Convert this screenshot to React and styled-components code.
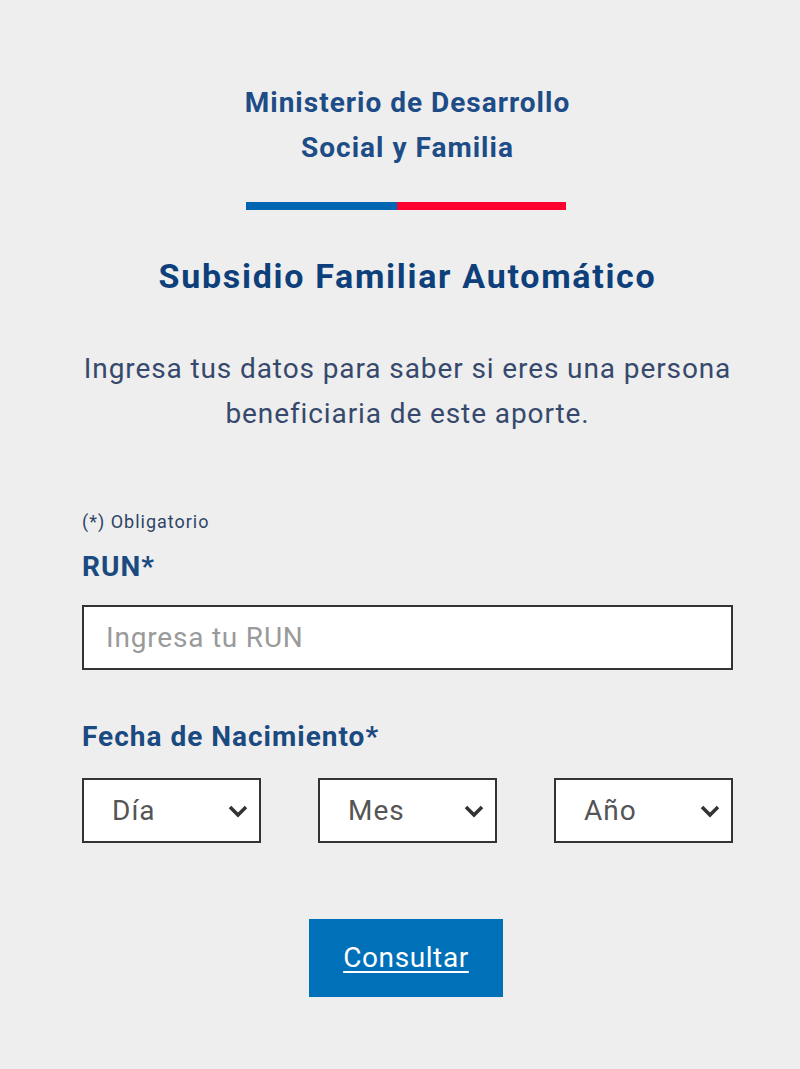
import React from "react"
import styled, { createGlobalStyle } from "styled-components"

const GlobalStyle = createGlobalStyle`
    html, body {
        margin: 0;
        padding: 0;
        background: #eeeeee;
        font-family: Roboto, "Liberation Sans", Arial, sans-serif;
    }
`

const Page = styled.div`
    width: 800px;
    min-height: 1069px;
    box-sizing: border-box;
    padding: 80px 67px 0 82px;
    display: flex;
    flex-direction: column;
    align-items: center;
`
const Ministry = styled.h2`
    margin: 0;
    font-size: 28px;
    line-height: 45px;
    letter-spacing: 1px;
    font-weight: 700;
    color: #1d4c86;
    text-align: center;
`
const FlagBar = styled.div`
    display: flex;
    height: 8px;
    margin: 32px 3px 0 0;
`
const Stripe = styled.span`
    display: block;
    height: 100%;
    width: ${p => p.$w}px;
    background: ${p => p.$color};
`
const Title = styled.h1`
    margin: 42px 0 0;
    font-size: 34px;
    line-height: 48px;
    letter-spacing: 1.7px;
    font-weight: 700;
    color: #0d3f7a;
    text-align: center;
`
const Lead = styled.p`
    margin: 46px 0 0;
    font-size: 28px;
    line-height: 45px;
    letter-spacing: 0.9px;
    font-weight: 400;
    color: #36496c;
    text-align: center;
`
const Form = styled.form`
    align-self: stretch;
    margin-top: 75px;
    display: flex;
    flex-direction: column;
`
const Required = styled.div`
    font-size: 18px;
    line-height: 22px;
    letter-spacing: 1px;
    color: #2d4466;
`
const Label = styled.label`
    display: block;
    margin-top: ${p => p.$top}px;
    font-size: 28px;
    line-height: 34px;
    letter-spacing: 1px;
    font-weight: 700;
    color: #1a4a80;
`
const TextInput = styled.input`
    box-sizing: border-box;
    margin-top: 21px;
    width: 100%;
    height: 65px;
    border: 2px solid #333;
    background: #fff;
    padding: 0 22px;
    font-family: inherit;
    font-size: 28px;
    letter-spacing: 0.8px;
    color: #333;
    outline: none;
    &::placeholder {
        color: #9a9a9a;
    }
`
const DateRow = styled.div`
    margin-top: 24px;
    display: grid;
    grid-template-columns: repeat(3, 179px);
    justify-content: space-between;
`
const SelectBox = styled.div`
    box-sizing: border-box;
    height: 65px;
    border: 2px solid #333;
    background: #fff;
    display: flex;
    align-items: center;
    justify-content: space-between;
    padding: 0 10px 0 28px;
    font-size: 28px;
    letter-spacing: 1px;
    color: #555;
`
const ButtonRow = styled.div`
    display: flex;
    justify-content: center;
    margin-top: 76px;
    padding-right: 3px;
`
const Submit = styled.button`
    width: 194px;
    height: 78px;
    border: none;
    background: #0070b8;
    color: #fff;
    font-family: inherit;
    font-size: 28px;
    line-height: 1;
    letter-spacing: 0.6px;
    text-decoration: underline;
    text-decoration-thickness: 2px;
    text-underline-offset: 4px;
    cursor: pointer;
`

const Chevron = () => (
    <svg width="22" height="14" viewBox="0 0 22 14">
        <path d="M3 3 L11 11 L19 3" fill="none" stroke="#333" strokeWidth="3.5" />
    </svg>
)

const Select = ({ label }) => (
    <SelectBox>
        <span>{label}</span>
        <Chevron />
    </SelectBox>
)

const App = () => {
    return (
        <>
            <GlobalStyle />
            <Page>
                <Ministry>
                    Ministerio de Desarrollo
                    <br />
                    Social y Familia
                </Ministry>
                <FlagBar>
                    <Stripe $w={151} $color="#0066b2" />
                    <Stripe $w={169} $color="#ff0033" />
                </FlagBar>
                <Title>Subsidio Familiar Automático</Title>
                <Lead>
                    Ingresa tus datos para saber si eres una persona
                    <br />
                    beneficiaria de este aporte.
                </Lead>
                <Form onSubmit={e => e.preventDefault()}>
                    <Required>(*) Obligatorio</Required>
                    <Label $top={17}>RUN*</Label>
                    <TextInput placeholder="Ingresa tu RUN" />
                    <Label $top={50}>Fecha de Nacimiento*</Label>
                    <DateRow>
                        <Select label="Día" />
                        <Select label="Mes" />
                        <Select label="Año" />
                    </DateRow>
                    <ButtonRow>
                        <Submit type="submit">Consultar</Submit>
                    </ButtonRow>
                </Form>
            </Page>
        </>
    )
}

export default App
